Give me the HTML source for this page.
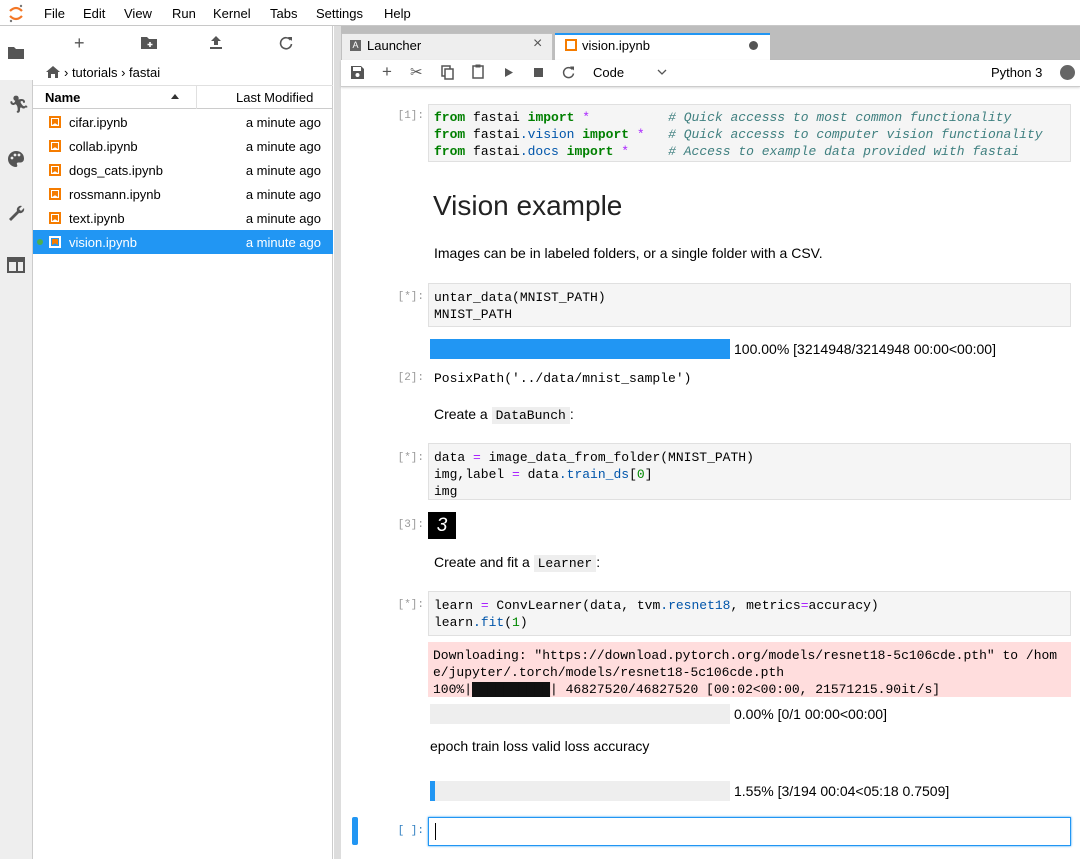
<!DOCTYPE html>
<html><head><meta charset="utf-8"><style>
*{box-sizing:border-box;margin:0;padding:0}
body{width:1080px;height:859px;overflow:hidden;background:#fff;font-family:"Liberation Sans",sans-serif;font-size:13px;color:#000;position:relative}
.a{position:absolute}
.mono{font-family:"Liberation Mono","DejaVu Sans Mono",monospace;font-size:13px;line-height:17px;white-space:pre}
.menu span{position:absolute;top:6px;font-size:13px}
.row{position:absolute;left:33px;width:300px;height:24px;font-size:13px}
.row .ic{position:absolute;left:16px;top:6px;width:12px;height:12px;border:2px solid #f57c00;background:#fff}
.row .ic:after{content:"";position:absolute;left:1px;top:1px;width:6px;height:6px;background:#f57c00;clip-path:polygon(0 0,100% 0,100% 100%,50% 70%,0 100%)}
.row .n{position:absolute;left:36px;top:5px}
.row .d{position:absolute;right:12px;top:5px}
.pr{position:absolute;left:342px;width:82px;text-align:right;color:#999;font-family:"Liberation Mono",monospace;font-size:11px}
.cell{position:absolute;left:428px;width:643px;background:#f5f5f5;border:1px solid #e0e0e0;padding:3px 5px}
.k{color:#008000;font-weight:bold}.o{color:#aa22ff}.c{color:#408080;font-style:italic}.b{color:#0055aa}.g{color:#008800}
.bar{position:absolute;left:430px;width:300px;height:20px;background:#eee}
.txt{position:absolute;font-size:14px}
code.i{font-family:"Liberation Mono",monospace;background:#eee;padding:1px 4px;font-size:13px}
</style></head><body>
<div class="a" style="left:0;top:0;width:1080px;height:26px;border-bottom:1px solid #c8c8c8"></div>
<svg class="a" style="left:7px;top:3px" width="18" height="20"><path d="M3 8 Q9 2 15 8" stroke="#f37726" stroke-width="2.2" fill="none"/><path d="M3 13 Q9 19 15 13" stroke="#f37726" stroke-width="2.2" fill="none"/><circle cx="14" cy="3" r="1.2" fill="#777"/><circle cx="4" cy="18" r="1.2" fill="#777"/></svg>
<div class="menu"><span style="left:44px">File</span><span style="left:83px">Edit</span><span style="left:124px">View</span><span style="left:172px">Run</span><span style="left:213px">Kernel</span><span style="left:270px">Tabs</span><span style="left:316px">Settings</span><span style="left:384px">Help</span></div>
<div class="a" style="left:0;top:80px;width:33px;height:779px;background:#eee;border-right:1px solid #ccc"></div>
<svg class="a" style="left:7px;top:44px" width="18" height="16"><path d="M1 3h6l2 2h8v10H1z" fill="#555"/></svg>
<div class="a" style="left:8px;top:95px;font-size:17px;color:#555">🏃︎</div>
<svg class="a" style="left:7px;top:150px" width="18" height="18"><path d="M9 1a8 8 0 1 0 0 16c1.5 0 1.5-1.5 1-2.5s0-2 1.5-2H14a4 4 0 0 0 3-4C17 4 13.5 1 9 1z" fill="#555"/><circle cx="5" cy="8" r="1.4" fill="#eee"/><circle cx="8" cy="5" r="1.4" fill="#eee"/><circle cx="12" cy="5" r="1.4" fill="#eee"/></svg>
<svg class="a" style="left:6px;top:202px" width="20" height="20"><path d="M3 17l8-8a4 4 0 0 1 5-5l-3 3 2 2 3-3a4 4 0 0 1-5 5l-8 8z" fill="#555"/></svg>
<svg class="a" style="left:7px;top:257px" width="18" height="16"><rect x="1" y="1" width="16" height="14" fill="none" stroke="#555" stroke-width="2"/><rect x="1" y="1" width="16" height="4" fill="#555"/><rect x="9" y="5" width="2" height="10" fill="#555"/></svg>
<div class="a" style="left:33px;top:26px;width:300px;height:833px;border-right:1px solid #ccc"></div>
<div class="a" style="left:74px;top:33px;font-size:18px;color:#555">+</div>
<svg class="a" style="left:141px;top:36px" width="16" height="13"><path d="M0 1h6l2 2h8v10H0z" fill="#555"/><path d="M9 6v5M6.5 8.5h5" stroke="#fff" stroke-width="1.6"/></svg>
<svg class="a" style="left:209px;top:36px" width="14" height="13"><path d="M7 0l5 5H9v4H5V5H2z" fill="#555"/><rect x="1" y="11" width="12" height="2" fill="#555"/></svg>
<svg class="a" style="left:279px;top:36px" width="14" height="14"><path d="M11.5 4A5.5 5.5 0 1 0 12.5 8" stroke="#555" stroke-width="1.6" fill="none"/><path d="M9 1l4 0 0 4z" fill="#555"/></svg>
<svg class="a" style="left:46px;top:66px" width="14" height="12"><path d="M7 0l7 6h-2v6H9V8H5v4H2V6H0z" fill="#555"/></svg>
<div class="a" style="left:64px;top:65px;font-size:13px">› tutorials › fastai</div>
<div class="a" style="left:33px;top:85px;width:300px;height:24px;border-top:1px solid #e0e0e0;border-bottom:1px solid #ccc"></div>
<div class="a" style="left:196px;top:85px;width:1px;height:24px;background:#e0e0e0"></div>
<div class="a" style="left:45px;top:90px;font-weight:bold;font-size:13px">Name</div>
<div class="a" style="left:171px;top:94px;width:0;height:0;border-left:4px solid transparent;border-right:4px solid transparent;border-bottom:5px solid #333"></div>
<div class="a" style="left:236px;top:90px;font-size:13px">Last Modified</div>
<div class="row" style="top:110px"><div class="ic"></div><span class="n">cifar.ipynb</span><span class="d">a minute ago</span></div>
<div class="row" style="top:134px"><div class="ic"></div><span class="n">collab.ipynb</span><span class="d">a minute ago</span></div>
<div class="row" style="top:158px"><div class="ic"></div><span class="n">dogs_cats.ipynb</span><span class="d">a minute ago</span></div>
<div class="row" style="top:182px"><div class="ic"></div><span class="n">rossmann.ipynb</span><span class="d">a minute ago</span></div>
<div class="row" style="top:206px"><div class="ic"></div><span class="n">text.ipynb</span><span class="d">a minute ago</span></div>
<div class="row" style="top:230px;background:#2196f3;color:#fff"><div class="a" style="left:4px;top:9px;width:6px;height:6px;border-radius:50%;background:#4caf50"></div><div class="ic" style="border-color:#fff;background:#2196f3"></div><span class="n">vision.ipynb</span><span class="d">a minute ago</span></div>
<div class="a" style="left:334px;top:26px;width:746px;height:34px;background:#bdbdbd"></div>
<div class="a" style="left:334px;top:26px;width:7px;height:833px;background:#ddd"></div>
<div class="a" style="left:341px;top:33px;width:212px;height:27px;background:#eee;border:1px solid #c0c0c0;border-bottom:none"></div>
<div class="a" style="left:350px;top:40px;width:11px;height:11px;background:#666;color:#fff;font-size:9px;text-align:center;line-height:11px">A</div>
<div class="a" style="left:367px;top:38px">Launcher</div>
<div class="a" style="left:533px;top:35px;font-size:16px;color:#555">×</div>
<div class="a" style="left:555px;top:33px;width:215px;height:28px;background:#fff;border-top:2px solid #2196f3"></div>
<div class="a" style="left:565px;top:39px;width:12px;height:12px;border:2px solid #f57c00"></div>
<div class="a" style="left:582px;top:38px">vision.ipynb</div>
<div class="a" style="left:749px;top:41px;width:9px;height:9px;border-radius:50%;background:#555"></div>
<div class="a" style="left:341px;top:60px;width:739px;height:27px;border-bottom:1px solid #ccc;box-shadow:0 1px 2px rgba(0,0,0,.15)"></div>
<svg class="a" style="left:351px;top:66px" width="13" height="13"><path d="M0 0h10l3 3v10H0z" fill="#555"/><rect x="2" y="1" width="8" height="4" fill="#fff"/><circle cx="6.5" cy="9" r="2" fill="#fff"/></svg>
<div class="a" style="left:382px;top:62px;font-size:17px;color:#555">+</div>
<div class="a" style="left:410px;top:63px;font-size:15px;color:#555">✂</div>
<svg class="a" style="left:441px;top:65px" width="13" height="15"><rect x="1" y="1" width="8" height="10" fill="none" stroke="#555" stroke-width="1.5"/><rect x="4" y="4" width="8" height="10" fill="#fff" stroke="#555" stroke-width="1.5"/></svg>
<svg class="a" style="left:472px;top:64px" width="12" height="15"><rect x="1" y="2" width="10" height="12" fill="none" stroke="#555" stroke-width="1.5"/><rect x="3.5" y="0.5" width="5" height="3" fill="#555"/></svg>
<svg class="a" style="left:505px;top:68px" width="8" height="9"><path d="M0 0l8 4.5L0 9z" fill="#555"/></svg>
<div class="a" style="left:534px;top:68px;width:9px;height:9px;background:#555"></div>
<svg class="a" style="left:562px;top:66px" width="13" height="13"><path d="M10.5 3.5A5 5 0 1 0 11.5 7.5" stroke="#555" stroke-width="1.5" fill="none"/><path d="M8 0.5l4 0 0 4z" fill="#555"/></svg>
<div class="a" style="left:593px;top:65px">Code</div>
<svg class="a" style="left:657px;top:69px" width="10" height="6"><path d="M1 1l4 4 4-4" stroke="#555" stroke-width="1.3" fill="none"/></svg>
<div class="a" style="left:991px;top:65px">Python 3</div>
<div class="a" style="left:1060px;top:65px;width:15px;height:15px;border-radius:50%;background:#666"></div>
<div class="pr" style="top:110px">[1]:</div>
<div class="cell mono" style="top:104px;height:58px;padding-top:4px"><span class="k">from</span> fastai <span class="k">import</span> <span class="o">*</span>          <span class="c"># Quick accesss to most common functionality</span>
<span class="k">from</span> fastai<span class="b">.vision</span> <span class="k">import</span> <span class="o">*</span>   <span class="c"># Quick accesss to computer vision functionality</span>
<span class="k">from</span> fastai<span class="b">.docs</span> <span class="k">import</span> <span class="o">*</span>     <span class="c"># Access to example data provided with fastai</span></div>
<div class="a" style="left:433px;top:190px;font-size:28px;color:#222">Vision example</div>
<div class="txt" style="left:434px;top:245px">Images can be in labeled folders, or a single folder with a CSV.</div>
<div class="pr" style="top:291px">[*]:</div>
<div class="cell mono" style="top:283px;height:44px;padding-top:5px">untar_data(MNIST_PATH)
MNIST_PATH</div>
<div class="bar" style="top:339px;background:#2196f3"></div>
<div class="txt" style="left:734px;top:341px">100.00% [3214948/3214948 00:00&lt;00:00]</div>
<div class="pr" style="top:372px">[2]:</div>
<div class="a mono" style="left:434px;top:370px">PosixPath('../data/mnist_sample')</div>
<div class="txt" style="left:434px;top:406px">Create a <code class="i">DataBunch</code>:</div>
<div class="pr" style="top:452px">[*]:</div>
<div class="cell mono" style="top:443px;height:57px;padding-top:5px">data <span class="o">=</span> image_data_from_folder(MNIST_PATH)
img,label <span class="o">=</span> data<span class="b">.train_ds</span>[<span class="g">0</span>]
img</div>
<div class="pr" style="top:519px">[3]:</div>
<div class="a" style="left:428px;top:512px;width:28px;height:27px;background:#000;color:#fff;font-size:19px;font-style:italic;text-align:center;line-height:27px">3</div>
<div class="txt" style="left:434px;top:554px">Create and fit a <code class="i">Learner</code>:</div>
<div class="pr" style="top:599px">[*]:</div>
<div class="cell mono" style="top:591px;height:45px;padding-top:5px">learn <span class="o">=</span> ConvLearner(data, tvm<span class="b">.resnet18</span>, metrics<span class="o">=</span>accuracy)
learn<span class="b">.fit</span>(<span class="g">1</span>)</div>
<div class="a mono" style="left:428px;top:642px;width:643px;height:55px;background:#fdd;padding:5px 5px">Downloading: "https://download.pytorch.org/models/resnet18-5c106cde.pth" to /hom
e/jupyter/.torch/models/resnet18-5c106cde.pth
100%|<span style="background:#111;color:#111">██████████</span>| 46827520/46827520 [00:02&lt;00:00, 21571215.90it/s]</div>
<div class="bar" style="top:704px"></div>
<div class="txt" style="left:734px;top:706px">0.00% [0/1 00:00&lt;00:00]</div>
<div class="txt" style="left:430px;top:738px">epoch train loss valid loss accuracy</div>
<div class="bar" style="top:781px"></div>
<div class="a" style="left:430px;top:781px;width:5px;height:20px;background:#2196f3"></div>
<div class="txt" style="left:734px;top:783px">1.55% [3/194 00:04&lt;05:18 0.7509]</div>
<div class="a" style="left:352px;top:817px;width:6px;height:28px;background:#2196f3;border-radius:2px"></div>
<div class="pr" style="top:825px;color:#307fc1">[ ]:</div>
<div class="a" style="left:428px;top:817px;width:643px;height:29px;border:1px solid #2196f3;box-shadow:0 0 2px #2196f3"></div>
<div class="a" style="left:435px;top:823px;width:1px;height:17px;background:#000"></div>
</body></html>
